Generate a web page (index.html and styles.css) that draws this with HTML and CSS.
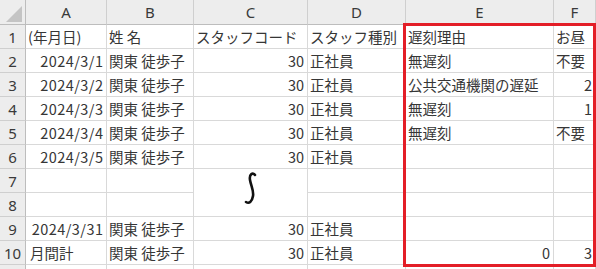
FILE: index.html
```html
<!DOCTYPE html>
<html lang="ja">
<head>
<meta charset="utf-8">
<title>勤怠表</title>
<link rel="stylesheet" href="styles.css">
</head>
<body>
<div class="sheet">
  <!-- column headers -->
  <div class="hd corner"><svg class="corner-tri" width="26" height="25" viewBox="0 0 26 25"><polygon points="6,22 22,22 22,6" fill="#c4c4c4"/></svg></div>
  <div class="hd col">A</div>
  <div class="hd col">B</div>
  <div class="hd col">C</div>
  <div class="hd col">D</div>
  <div class="hd col">E</div>
  <div class="hd col">F</div>

  <!-- row 1 -->
  <div class="hd row">1</div>
  <div class="c">(年月日)</div>
  <div class="c">姓&nbsp;名</div>
  <div class="c">スタッフコード</div>
  <div class="c">スタッフ種別</div>
  <div class="c">遅刻理由</div>
  <div class="c">お昼</div>

  <!-- row 2 -->
  <div class="hd row">2</div>
  <div class="c r"><span class="num">2024/3/1</span></div>
  <div class="c">関東 徒歩子</div>
  <div class="c r">30</div>
  <div class="c">正社員</div>
  <div class="c">無遅刻</div>
  <div class="c">不要</div>

  <!-- row 3 -->
  <div class="hd row">3</div>
  <div class="c r"><span class="num">2024/3/2</span></div>
  <div class="c">関東 徒歩子</div>
  <div class="c r">30</div>
  <div class="c">正社員</div>
  <div class="c">公共交通機関の遅延</div>
  <div class="c r">2</div>

  <!-- row 4 -->
  <div class="hd row">4</div>
  <div class="c r"><span class="num">2024/3/3</span></div>
  <div class="c">関東 徒歩子</div>
  <div class="c r">30</div>
  <div class="c">正社員</div>
  <div class="c">無遅刻</div>
  <div class="c r">1</div>

  <!-- row 5 -->
  <div class="hd row">5</div>
  <div class="c r"><span class="num">2024/3/4</span></div>
  <div class="c">関東 徒歩子</div>
  <div class="c r">30</div>
  <div class="c">正社員</div>
  <div class="c">無遅刻</div>
  <div class="c">不要</div>

  <!-- row 6 -->
  <div class="hd row">6</div>
  <div class="c r"><span class="num">2024/3/5</span></div>
  <div class="c">関東 徒歩子</div>
  <div class="c r">30</div>
  <div class="c">正社員</div>
  <div class="c"></div>
  <div class="c"></div>

  <!-- row 7 (C7:C8 merged, holds the omission mark) -->
  <div class="hd row">7</div>
  <div class="c"></div>
  <div class="c"></div>
  <div class="c merged">
    <svg class="wave" width="14" height="34" viewBox="0 0 14 34"><path d="M12 3 C10 0 6 2 7 8 C8 14 11 19 10 24 C9 30 6 32 3 30" fill="none" stroke="#111" stroke-width="2.6" stroke-linecap="round"/></svg>
  </div>
  <div class="c"></div>
  <div class="c"></div>
  <div class="c"></div>

  <!-- row 8 -->
  <div class="hd row">8</div>
  <div class="c"></div>
  <div class="c"></div>
  <div class="c"></div>
  <div class="c"></div>
  <div class="c"></div>

  <!-- row 9 -->
  <div class="hd row">9</div>
  <div class="c r"><span class="num">2024/3/31</span></div>
  <div class="c">関東 徒歩子</div>
  <div class="c r">30</div>
  <div class="c">正社員</div>
  <div class="c"></div>
  <div class="c"></div>

  <!-- row 10 -->
  <div class="hd row">10</div>
  <div class="c lead">月間計</div>
  <div class="c">関東 徒歩子</div>
  <div class="c r">30</div>
  <div class="c">正社員</div>
  <div class="c r">0</div>
  <div class="c r">3</div>

  <!-- row 11 (partially visible) -->
  <div class="hd row"></div>
  <div class="c"></div>
  <div class="c"></div>
  <div class="c"></div>
  <div class="c"></div>
  <div class="c"></div>
  <div class="c"></div>

  <!-- highlight frame over E1:F10 -->
  <div class="frame"></div>
</div>
</body>
</html>
```

FILE: styles.css
```css
html, body {
  margin: 0;
  padding: 0;
  background: #fff;
  overflow: hidden;
}

body {
  width: 596px;
  height: 269px;
  font-family: "Noto Sans CJK JP", "Noto Sans", sans-serif;
  font-size: 14.5px;
  color: #363636;
}

.sheet {
  position: relative;
  display: grid;
  grid-template-columns: 26px 81px 87px 114px 98px 148px 42px;
  grid-template-rows: 25px repeat(11, 24px);
}

.hd {
  box-sizing: border-box;
  background: #ededed;
  color: #3a3a3a;
  display: flex;
  align-items: center;
  justify-content: center;
  font-family: "Noto Sans", "Noto Sans CJK JP", sans-serif;
  font-size: 15px;
  border-right: 1px solid #cfcfcf;
  border-bottom: 1px solid #cfcfcf;
}

.hd.col {
  border-bottom-color: #bdbdbd;
}

.hd.row {
  border-right-color: #bdbdbd;
  padding-top: 1px;
}

.corner {
  position: relative;
  border-bottom-color: #bdbdbd;
  border-right-color: #bdbdbd;
}

.corner-tri {
  position: absolute;
  left: 0;
  top: 0;
}

.c {
  box-sizing: border-box;
  border-right: 1px solid #d9d9d9;
  border-bottom: 1px solid #d9d9d9;
  padding: 0 3px 1px 2px;
  display: flex;
  align-items: center;
  white-space: nowrap;
  overflow: hidden;
}

.c.r {
  justify-content: flex-end;
}

.c.lead {
  padding-left: 4px;
}

/* dates are set slightly wider */
.num {
  letter-spacing: 0.45px;
  margin-right: -0.45px;
}

.merged {
  grid-row: span 2;
  justify-content: center;
}

.wave {
  margin-left: -1px;
  margin-top: -6px;
}

/* red selection frame lying over columns E:F */
.frame {
  position: absolute;
  box-sizing: border-box;
  left: 403px;
  top: 23px;
  width: 193px;
  height: 244px;
  border: 3px solid #e31e27;
}
```
